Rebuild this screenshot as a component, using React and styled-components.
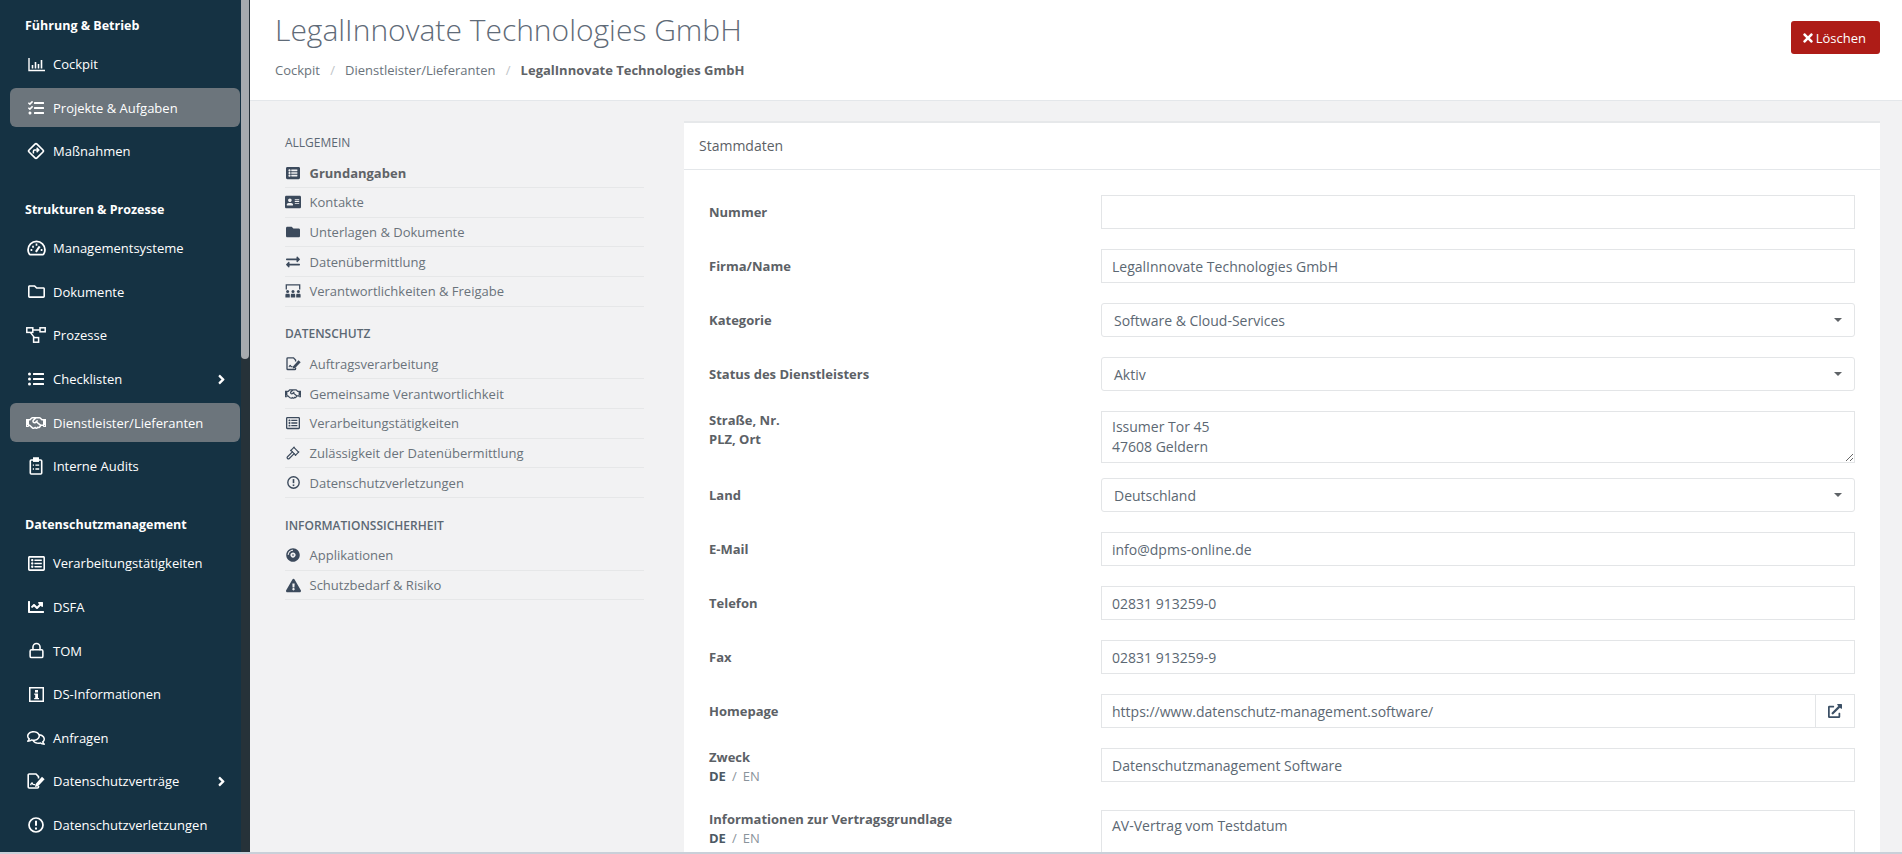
import styled, { createGlobalStyle } from "styled-components";
import {
  FaTasks, FaRegFolder, FaListUl, FaRegHandshake,
  FaRegListAlt, FaChartLine, FaRegComments, FaListAlt, FaAddressCard, FaFolder,
  FaExchangeAlt, FaCompactDisc, FaExclamationTriangle, FaTimes, FaAngleRight, FaExternalLinkAlt,
} from "react-icons/fa";
import { Gavel, Lock } from "lucide-react";

const GlobalStyle = createGlobalStyle`
  html, body { margin: 0; height: 100%; overflow: hidden; }
  body { font-family: "Open Sans", "Liberation Sans", sans-serif; font-size: 13px; color: #5c6873; background: #f2f2f3; }
  * { box-sizing: border-box; }
`;

const Page = styled.div`
  display: flex;
  height: 854px;
  overflow: hidden;
`;

const BottomLine = styled.div`
  position: fixed;
  left: 0;
  right: 0;
  bottom: 0;
  height: 2px;
  background: #c9d0d9;
`;

const Sidebar = styled.aside`
  position: relative;
  flex: 0 0 250px;
  padding: 10px 10px 0;
  overflow: hidden;
  background: #153243;
`;

const ScrollTrack = styled.div`
  position: absolute;
  top: 0;
  right: 0;
  bottom: 0;
  width: 9px;
  background: #263239;
`;

const ScrollThumb = styled.div`
  height: 359px;
  width: 8px;
  border-radius: 0 0 4px 4px;
  background: #a6abaf;
`;

const NavHeading = styled.div`
  height: 30px;
  margin: ${(p) => (p.$first ? "0" : "23.6px")} 0 4.5px;
  padding-left: 15px;
  line-height: 32px;
  font-size: 12.5px;
  font-weight: 700;
  color: #fff;
`;

const NavItem = styled.div`
  display: flex;
  align-items: center;
  width: 230px;
  height: 39px;
  margin-bottom: 4.6px;
  padding: 0 11px 0 16px;
  border-radius: 6px;
  font-size: 13px;
  color: #fff;
  background: ${(p) => (p.$active ? "#6c757c" : "transparent")};
`;

const NavIcon = styled.span`
  display: flex;
  align-items: center;
  justify-content: center;
  flex: 0 0 20px;
  margin-right: 7px;
  font-size: 16px;
`;

const NavChevron = styled.span`
  display: flex;
  margin-left: auto;
  font-size: 15px;
`;

const Main = styled.main`
  flex: 1;
  min-width: 0;
  display: flex;
  flex-direction: column;
`;

const Header = styled.header`
  display: flex;
  justify-content: space-between;
  height: 101px;
  padding: 0 22px 0 25px;
  background: #fff;
  border-bottom: 1px solid #e4e7ea;
`;

const Title = styled.h1`
  margin: 8px 0 0;
  font-size: 30px;
  line-height: 44px;
  font-weight: 300;
  color: #5f6b78;
`;

const Breadcrumb = styled.nav`
  display: flex;
  align-items: center;
  margin-top: 9px;
  line-height: 18px;
  font-size: 13px;
  color: #6a737b;
`;

const Crumb = styled.span`
  font-weight: ${(p) => (p.$current ? 700 : 400)};
  color: ${(p) => (p.$current ? "#5f6367" : "#6a737b")};
`;

const CrumbSep = styled.span`
  margin: 0 10.2px;
  color: #c0c4c8;
`;

const DeleteButton = styled.button`
  display: flex;
  align-items: center;
  gap: 1px;
  align-self: flex-start;
  height: 33px;
  margin-top: 21px;
  padding: 0 14px 0 10px;
  border: 0;
  border-radius: 3px;
  font: 13px "Open Sans", sans-serif;
  color: #fff;
  background: #ae1c17;
`;

const Content = styled.div`
  flex: 1;
  display: flex;
  align-items: flex-start;
  gap: 40px;
  padding: 20px 22px 0 35px;
  overflow: hidden;
`;

const SideColumn = styled.div`
  flex: 0 0 359px;
  padding-top: 12px;
`;

const SideHeading = styled.div`
  height: 20px;
  margin: ${(p) => (p.$first ? "0" : "17.5px")} 0 5.4px;
  line-height: 20px;
  font-size: 12px;
  text-transform: uppercase;
  font-weight: ${(p) => (p.$strong ? 600 : 400)};
  color: #5c6873;
`;

const SideItem = styled.div`
  display: flex;
  align-items: center;
  height: 29.7px;
  border-bottom: 1px solid #e6e7e8;
  font-size: 13px;
  font-weight: ${(p) => (p.$active ? 700 : 400)};
  color: ${(p) => (p.$active ? "#5f6367" : "#6a737b")};
`;

const SideIcon = styled.span`
  display: flex;
  align-items: center;
  justify-content: center;
  flex: 0 0 16px;
  margin-right: 8.5px;
  font-size: 14px;
  color: #3c4a5c;
`;

const Panel = styled.section`
  flex: 1;
  min-width: 0;
  background: #fff;
  border-top: 2px solid #e6e8ea;
`;

const PanelTitle = styled.div`
  height: 47px;
  padding-left: 15px;
  line-height: 46px;
  font-size: 14px;
  color: #5c6166;
  border-bottom: 1px solid #e4e7ea;
`;

const PanelBody = styled.div`
  padding: 25px 25px 0 25px;
`;

const Row = styled.div`
  display: grid;
  grid-template-columns: 392px 754px;
  align-items: ${(p) => (p.$top ? "start" : "center")};
  margin-bottom: ${(p) => p.$gap || 20}px;
`;

const Label = styled.label`
  font-size: 13px;
  line-height: 19px;
  font-weight: 700;
  color: #5c6166;
`;

const LangSwitch = styled.div`
  font-weight: 400;
  color: #8a939b;
`;

const LangActive = styled.span`
  font-weight: 700;
  color: #4c5964;
`;

const LangSep = styled.span`
  margin: 0 6px;
`;

const inputCss = `
  display: block;
  width: 100%;
  height: 34px;
  padding: 0 10px;
  border: 1px solid #e3e5e7;
  outline: 0;
  font: 14px "Open Sans", sans-serif;
  color: #5c6873;
  background: #fff;
`;

const Input = styled.input`${inputCss}`;

const TextArea = styled.textarea`
  ${inputCss}
  height: ${(p) => p.$height}px;
  padding-top: 5px;
  line-height: 19.5px;
  resize: ${(p) => (p.$fixed ? "none" : "vertical")};
`;

const Select = styled.div`
  ${inputCss}
  display: flex;
  align-items: center;
  justify-content: space-between;
  padding: 0 12px;
  border-radius: 3px;
`;

const Caret = styled.span`
  width: 0;
  height: 0;
  border-left: 4px solid transparent;
  border-right: 4px solid transparent;
  border-top: 4px solid #5f6367;
`;

const InputGroup = styled.div`
  display: flex;
`;

const GroupInput = styled(Input)`
  flex: 1;
  min-width: 0;
`;

const GroupAddon = styled.span`
  display: flex;
  align-items: center;
  justify-content: center;
  flex: 0 0 40px;
  margin-left: -1px;
  border: 1px solid #e3e5e7;
  font-size: 14px;
  color: #3c5066;
`;

const ChartBars = () => (
  <svg width="17" height="15" viewBox="0 0 17 15" fill="none" stroke="currentColor" strokeWidth="1.4">
    <path d="M1 1v12.5h16" />
    <path d="M4.5 8v3.5M7.5 5v6.5M10.5 7v4.5M13.5 3v8.5" strokeWidth="1.6" />
  </svg>
);

const DirectionsOutline = () => (
  <svg width="18" height="18" viewBox="0 0 18 18" fill="none" stroke="currentColor" strokeWidth="1.7">
    <rect x="3.4" y="3.4" width="11.2" height="11.2" rx="1.4" transform="rotate(45 9 9)" />
    <path d="M6.4 11.4V9.2c0-.7.5-1.2 1.2-1.2h3.4M9.6 5.8L11.8 8 9.6 10.2" strokeWidth="1.5" />
  </svg>
);

const GaugeOutline = () => (
  <svg width="19" height="16" viewBox="0 0 18 15" fill="none" stroke="currentColor" strokeWidth="1.7">
    <path d="M9 1.2C4.6 1.2 1 4.7 1 9.1c0 1.5.4 2.9 1.2 4.1.2.3.5.5.9.5h11.8c.4 0 .7-.2.9-.5.8-1.2 1.2-2.6 1.2-4.1 0-4.4-3.6-7.9-8-7.9z" />
    <path d="M8.4 11.2L12 6" strokeWidth="2" />
    <path d="M3.4 9.5h1.6M4.9 6.2h1.6M8.2 4.3h1.6M13 9.5h1.6" strokeWidth="1.9" />
  </svg>
);

const ProcessDiagram = () => (
  <svg width="20" height="16" viewBox="0 0 20 16" fill="none" stroke="currentColor" strokeWidth="1.5">
    <rect x="0.8" y="0.8" width="6" height="4.6" />
    <rect x="14" y="0.8" width="5.2" height="4" />
    <rect x="7.6" y="10.6" width="5" height="4.6" />
    <path d="M6.8 3h7.2M4.4 5.4l4 5.2" />
  </svg>
);

const ClipboardOutline = () => (
  <svg width="14" height="18" viewBox="0 0 14 18" fill="none" stroke="currentColor" strokeWidth="1.6">
    <rect x="1.3" y="3" width="11.4" height="14" rx="1" />
    <rect x="4.5" y="0.8" width="5" height="3.6" fill="currentColor" strokeWidth="1" />
    <path d="M3.8 8.2h1.2M6.4 8.2h3.8M3.8 12h1.2M6.4 12h3.8" strokeWidth="1.3" />
  </svg>
);

const FileSign = ({ size = 18 }) => (
  <svg width={size} height={size * 0.89} viewBox="0 0 18 16" fill="none" stroke="currentColor" strokeWidth="1.6">
    <path d="M11.5 5.5V3.6L9 1H2.2c-.6 0-1 .4-1 1v12c0 .6.4 1 1 1h8.3c.6 0 1-.4 1-1v-1" />
    <path d="M3.6 12.2c.9-2.4 1.6-3 2-1.4.3 1.1 1 .9 2.4.9" strokeWidth="1.3" />
    <path d="M8.6 11l6.4-7.2 2.6 2.4-6.6 7-3 .7z" fill="currentColor" stroke="none" />
  </svg>
);

const UsersBoard = () => (
  <svg width="16" height="14" viewBox="0 0 16 14" fill="none" stroke="currentColor" strokeWidth="1.3">
    <path d="M1.3 5.5V.9h13.4v4.6" />
    <g fill="currentColor" stroke="none">
      <circle cx="2.6" cy="7.4" r="1.5" />
      <circle cx="8" cy="7.4" r="1.5" />
      <circle cx="13.4" cy="7.4" r="1.5" />
      <path d="M.4 13.6v-2.7c0-.6.5-1.1 1.1-1.1h2.2c.6 0 1.1.5 1.1 1.1v2.7zM5.8 13.6v-2.7c0-.6.5-1.1 1.1-1.1h2.2c.6 0 1.1.5 1.1 1.1v2.7zM11.2 13.6v-2.7c0-.6.5-1.1 1.1-1.1h2.2c.6 0 1.1.5 1.1 1.1v2.7z" />
    </g>
  </svg>
);

const InfoBox = () => (
  <svg width="15" height="15" viewBox="0 0 15 15">
    <path fill="currentColor" fillRule="evenodd" d="M0 0h15v15H0zM1.5 1.5v12h12v-12zM6 3h3v2.4H6zM5.2 6.4H9v4.5h1v1.4H5.2v-1.4h1V7.8h-1z" />
  </svg>
);

const AlertCircle = ({ size = 16 }) => (
  <svg width={size} height={size} viewBox="0 0 16 16" fill="none" stroke="currentColor" strokeWidth="1.7">
    <circle cx="8" cy="8" r="7" />
    <path d="M8 3.8v5" strokeWidth="2" />
    <path d="M8 10.4v2" strokeWidth="2" />
  </svg>
);

const navGroups = [
  {
    title: "Führung & Betrieb",
    items: [
      { label: "Cockpit", icon: <ChartBars /> },
      { label: "Projekte & Aufgaben", icon: <FaTasks />, active: true },
      { label: "Maßnahmen", icon: <DirectionsOutline /> },
    ],
  },
  {
    title: "Strukturen & Prozesse",
    items: [
      { label: "Managementsysteme", icon: <GaugeOutline /> },
      { label: "Dokumente", icon: <FaRegFolder size={17} /> },
      { label: "Prozesse", icon: <ProcessDiagram /> },
      { label: "Checklisten", icon: <FaListUl />, more: true },
      { label: "Dienstleister/Lieferanten", icon: <FaRegHandshake size={20} />, active: true },
      { label: "Interne Audits", icon: <ClipboardOutline /> },
    ],
  },
  {
    title: "Datenschutzmanagement",
    items: [
      { label: "Verarbeitungstätigkeiten", icon: <FaRegListAlt size={17} /> },
      { label: "DSFA", icon: <FaChartLine /> },
      { label: "TOM", icon: <Lock size={17} strokeWidth={2.2} /> },
      { label: "DS-Informationen", icon: <InfoBox /> },
      { label: "Anfragen", icon: <FaRegComments size={18} /> },
      { label: "Datenschutzverträge", icon: <FileSign />, more: true },
      { label: "Datenschutzverletzungen", icon: <AlertCircle /> },
    ],
  },
];

const sideGroups = [
  {
    title: "Allgemein",
    items: [
      { label: "Grundangaben", icon: <FaListAlt />, active: true },
      { label: "Kontakte", icon: <FaAddressCard size={16} /> },
      { label: "Unterlagen & Dokumente", icon: <FaFolder /> },
      { label: "Datenübermittlung", icon: <FaExchangeAlt /> },
      { label: "Verantwortlichkeiten & Freigabe", icon: <UsersBoard /> },
    ],
  },
  {
    title: "Datenschutz",
    strong: true,
    items: [
      { label: "Auftragsverarbeitung", icon: <FileSign size={15} /> },
      { label: "Gemeinsame Verantwortlichkeit", icon: <FaRegHandshake size={16} /> },
      { label: "Verarbeitungstätigkeiten", icon: <FaRegListAlt /> },
      { label: "Zulässigkeit der Datenübermittlung", icon: <Gavel size={14} /> },
      { label: "Datenschutzverletzungen", icon: <AlertCircle size={13} /> },
    ],
  },
  {
    title: "Informationssicherheit",
    strong: true,
    items: [
      { label: "Applikationen", icon: <FaCompactDisc /> },
      { label: "Schutzbedarf & Risiko", icon: <FaExclamationTriangle size={15} /> },
    ],
  },
];

const Lang = () => (
  <LangSwitch>
    <LangActive>DE</LangActive>
    <LangSep>/</LangSep>EN
  </LangSwitch>
);

const TextRow = ({ label, value }) => (
  <Row>
    <Label>{label}</Label>
    <Input readOnly defaultValue={value} />
  </Row>
);

const SelectRow = ({ label, value }) => (
  <Row>
    <Label>{label}</Label>
    <Select>
      {value}
      <Caret />
    </Select>
  </Row>
);

export default function App() {
  return (
    <Page>
      <GlobalStyle />
      <Sidebar>
        {navGroups.map((group, i) => (
          <div key={group.title}>
            <NavHeading $first={i === 0}>{group.title}</NavHeading>
            {group.items.map((item) => (
              <NavItem key={item.label} $active={item.active}>
                <NavIcon>{item.icon}</NavIcon>
                {item.label}
                {item.more && (
                  <NavChevron>
                    <FaAngleRight />
                  </NavChevron>
                )}
              </NavItem>
            ))}
          </div>
        ))}
        <ScrollTrack>
          <ScrollThumb />
        </ScrollTrack>
      </Sidebar>
      <Main>
        <Header>
          <div>
            <Title>LegalInnovate Technologies GmbH</Title>
            <Breadcrumb>
              <Crumb>Cockpit</Crumb>
              <CrumbSep>/</CrumbSep>
              <Crumb>Dienstleister/Lieferanten</Crumb>
              <CrumbSep>/</CrumbSep>
              <Crumb $current>LegalInnovate Technologies GmbH</Crumb>
            </Breadcrumb>
          </div>
          <DeleteButton>
            <FaTimes size={14} />
            Löschen
          </DeleteButton>
        </Header>
        <Content>
          <SideColumn>
            {sideGroups.map((group, i) => (
              <div key={group.title}>
                <SideHeading $first={i === 0} $strong={group.strong}>{group.title}</SideHeading>
                {group.items.map((item) => (
                  <SideItem key={item.label} $active={item.active}>
                    <SideIcon>{item.icon}</SideIcon>
                    {item.label}
                  </SideItem>
                ))}
              </div>
            ))}
          </SideColumn>
          <Panel>
            <PanelTitle>Stammdaten</PanelTitle>
            <PanelBody>
              <TextRow label="Nummer" value="" />
              <TextRow label="Firma/Name" value="LegalInnovate Technologies GmbH" />
              <SelectRow label="Kategorie" value="Software & Cloud-Services" />
              <SelectRow label="Status des Dienstleisters" value="Aktiv" />
              <Row $top $gap={15}>
                <Label>
                  Straße, Nr.
                  <br />
                  PLZ, Ort
                </Label>
                <TextArea $height={52} readOnly defaultValue={"Issumer Tor 45\n47608 Geldern"} />
              </Row>
              <SelectRow label="Land" value="Deutschland" />
              <TextRow label="E-Mail" value="info@dpms-online.de" />
              <TextRow label="Telefon" value="02831 913259-0" />
              <TextRow label="Fax" value="02831 913259-9" />
              <Row>
                <Label>Homepage</Label>
                <InputGroup>
                  <GroupInput readOnly defaultValue="https://www.datenschutz-management.software/" />
                  <GroupAddon>
                    <FaExternalLinkAlt />
                  </GroupAddon>
                </InputGroup>
              </Row>
              <Row $top $gap={24}>
                <Label>
                  Zweck
                  <Lang />
                </Label>
                <Input readOnly defaultValue="Datenschutzmanagement Software" />
              </Row>
              <Row $top>
                <Label>
                  Informationen zur Vertragsgrundlage
                  <Lang />
                </Label>
                <TextArea $height={80} $fixed readOnly defaultValue="AV-Vertrag vom Testdatum" />
              </Row>
            </PanelBody>
          </Panel>
        </Content>
      </Main>
      <BottomLine />
    </Page>
  );
}
